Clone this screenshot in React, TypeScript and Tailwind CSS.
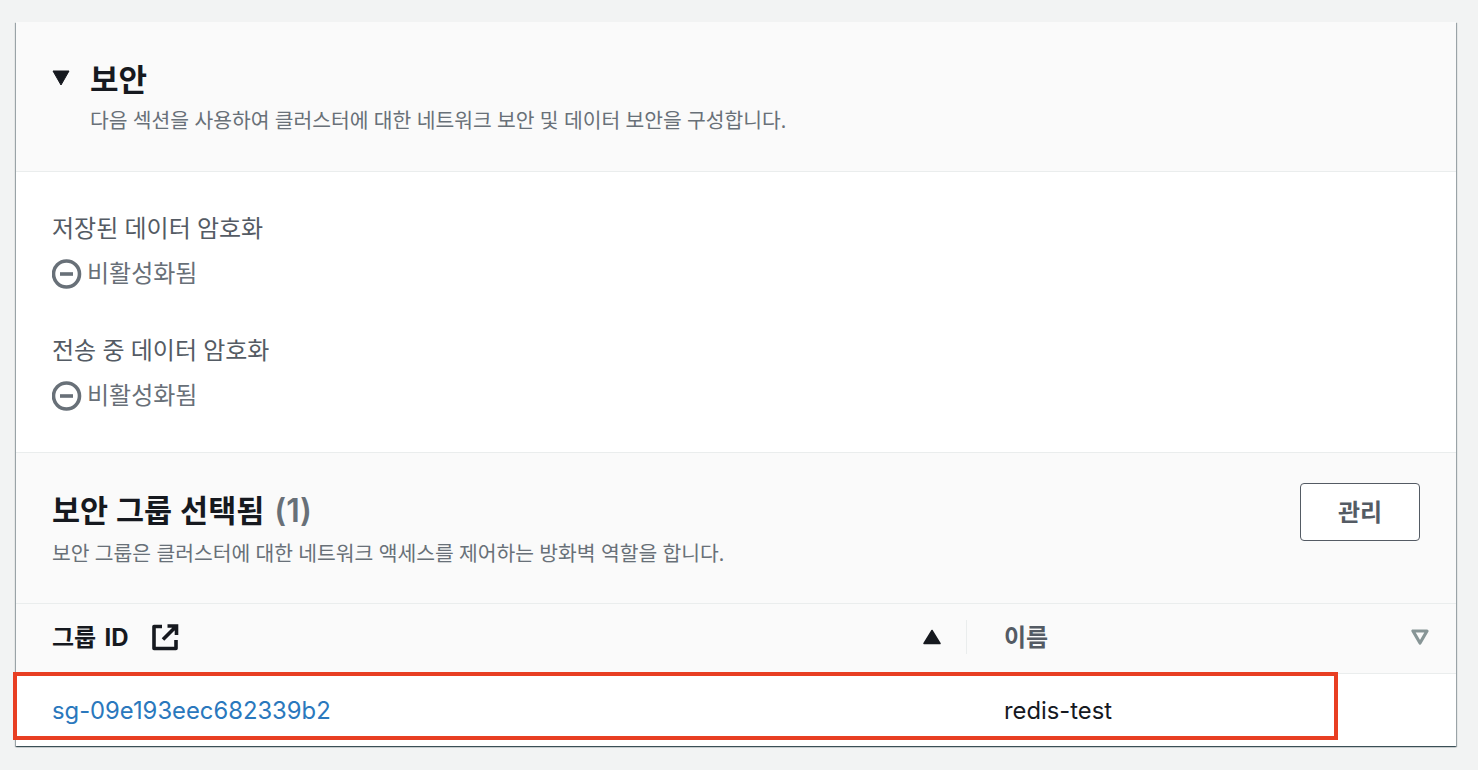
import React from 'react';

const font = { fontFamily: '"Noto Sans", "Noto Sans CJK KR", sans-serif' };

function DisabledIcon() {
  return (
    <svg width="30" height="30" viewBox="0 0 30 30" fill="none" className="shrink-0">
      <circle cx="14.500" cy="15" r="13" stroke="#687078" strokeWidth="3.600" />
      <path d="M8 15h13" stroke="#687078" strokeWidth="3.600" />
    </svg>
  );
}

function ExternalIcon() {
  return (
    <svg width="28" height="28" viewBox="0 0 28 28" fill="none" className="shrink-0">
      <path d="M11 3.500H3v22h22V17" stroke="#16191f" strokeWidth="3.600" strokeLinejoin="round" />
      <path d="M16.500 3h9v9M25 3.500 12 16.500" stroke="#16191f" strokeWidth="3.600" />
    </svg>
  );
}

function SortIcon({ filled }: { filled?: boolean }) {
  return (
    <svg width="18" height="16" viewBox="0 0 18 16" className="shrink-0">
      {filled ? (
        <polygon points="9,1.500 17,14.500 1,14.500" fill="#16191f" stroke="#16191f" strokeWidth="1.500" strokeLinejoin="round" />
      ) : (
        <polygon points="2,2 16,2 9,14" fill="none" stroke="#879596" strokeWidth="3.200" strokeLinejoin="round" />
      )}
    </svg>
  );
}

function StatusField({ label }: { label: string }) {
  return (
    <div className="flex flex-col">
      <div className="text-[24px] leading-[34px] text-[#545b64]">{label}</div>
      <div className="mt-[12px] flex items-center gap-[5px] text-[24px] leading-[34px] text-[#687078]">
        <DisabledIcon />
        <span className="-translate-y-[1px]">비활성화됨</span>
      </div>
    </div>
  );
}

export default function App() {
  return (
    <div className="h-[770px] w-[1478px] overflow-hidden bg-[#f2f3f3] pl-[16px] pt-[22px]" style={font}>
      <div className="relative w-[1440px] bg-white shadow-[0_1px_1px_0_rgba(0,28,36,0.5),1px_1px_1px_0_rgba(0,28,36,0.3),-1px_1px_1px_0_rgba(0,28,36,0.3)]">
        <header className="flex h-[150px] border-b border-[#eaeded] bg-[#fafafa] pl-[36px] pt-[38px]">
          <div className="mt-[10px] w-[38px]">
            <svg width="18" height="16" viewBox="0 0 18 16">
              <polygon points="1,1 17,1 9,15" fill="#16191f" stroke="#16191f" strokeWidth="1" strokeLinejoin="round" />
            </svg>
          </div>
          <div>
            <h2 className="text-[31px] font-bold leading-[38px] text-[#16191f]">보안</h2>
            <p className="mt-[8px] text-[20.400px] leading-[28px] text-[#687078]">
              다음 섹션을 사용하여 클러스터에 대한 네트워크 보안 및 데이터 보안을 구성합니다.
            </p>
          </div>
        </header>

        <div className="flex h-[280px] flex-col gap-[42px] pl-[36px] pt-[39px]">
          <StatusField label="저장된 데이터 암호화" />
          <StatusField label="전송 중 데이터 암호화" />
        </div>

        <div className="flex h-[152px] justify-between border-y border-[#eaeded] bg-[#fafafa] pl-[36px] pr-[36px] pt-[30px]">
          <div>
            <h3 className="mt-[7px] text-[30.500px] font-bold leading-[40px] text-[#16191f]">
              보안 그룹 선택됨 <span className="ml-[2px] font-['Inter'] text-[32px] font-semibold text-[#687078]">(1)</span>
            </h3>
            <p className="mt-[8px] text-[20.400px] leading-[28px] text-[#687078]">
              보안 그룹은 클러스터에 대한 네트워크 액세스를 제어하는 방화벽 역할을 합니다.
            </p>
          </div>
          <button className="h-[58px] w-[120px] rounded-[4px] border border-[#545b64] bg-white text-[24px] font-bold text-[#545b64]">
            관리
          </button>
        </div>

        <div className="flex h-[70px] items-center border-b border-[#eaeded] bg-[#fafafa] pb-[3px]">
          <div className="flex h-[34px] w-[951px] items-center border-r border-[#eaeded] pl-[36px] pr-[25px]">
            <span className="text-[24px] font-bold text-[#16191f]">
              그룹 <span className="ml-[2px] font-['Inter'] text-[24px]">ID</span>
            </span>
            <span className="ml-[23px]"><ExternalIcon /></span>
            <span className="ml-auto"><SortIcon filled /></span>
          </div>
          <div className="flex flex-1 items-center pl-[37px] pr-[27px]">
            <span className="text-[24px] font-bold text-[#545b64]">이름</span>
            <span className="ml-auto"><SortIcon /></span>
          </div>
        </div>

        <div className="flex h-[72px] items-center pt-[2px]">
          <div className="w-[951px] pl-[36px] font-['Inter'] text-[23.800px] text-[#2a78bd]">sg-09e193eec682339b2</div>
          <div className="pl-[37px] font-['Inter'] text-[23.800px] text-[#16191f]">redis-test</div>
        </div>

        <div className="absolute left-[-3px] top-[650px] h-[68px] w-[1325px] border-[4px] border-[#e83e22]" />
      </div>
    </div>
  );
}
